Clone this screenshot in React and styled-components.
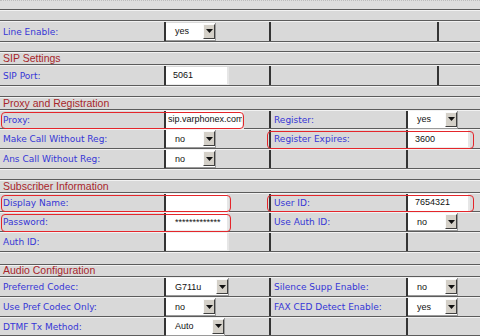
import React from 'react';
import styled, {createGlobalStyle, css} from 'styled-components';

const GlobalStyle = createGlobalStyle`
  html, body {
    margin: 0;
    padding: 0;
    background: #d8d8d8;
  }
  * {
    box-sizing: border-box;
  }
`;

const LINE_DARK = '#5c5c5c';
const LINE_LIGHT = '#f2f2f2';
const DIVIDER = '2px solid #343434';

const Page = styled.div`
  width: 480px;
  height: 336px;
  overflow: hidden;
  display: flex;
  flex-direction: column;
  background: #d9d9d9;
  font-family: "DejaVu Sans", Verdana, sans-serif;
`;

const stripe = css`
  flex: none;
  height: ${p => p.$h}px;
  background: #d9d9d9;
  border-top: 1px solid ${LINE_LIGHT};
  border-bottom: 1px solid ${LINE_DARK};
`;

const TopBand = styled.div`
  ${stripe}
  background: #dedede;
  border-top: 1px dotted #bdbdbd;
`;

const Band = styled.div`
  ${stripe}
`;

const SectionTitle = styled.div`
  ${stripe}
  display: flex;
  align-items: flex-end;
  padding: 0 0 0 3px;
  font-family: "Liberation Sans", Arial, sans-serif;
  font-size: 10.5px;
  line-height: 11px;
  color: #a8262b;
`;

const Row = styled.div`
  ${stripe}
  display: flex;
`;

const Pair = styled.div`
  position: relative;
  display: flex;
  flex: ${p => (p.$grow ? 1 : 'none')};

  ${p => p.$hl && css`
    &::after {
      content: '';
      position: absolute;
      top: 1px;
      bottom: -1px;
      left: ${p.$hl[0]}px;
      right: ${p.$hl[1]}px;
      border: 1px solid #e4262b;
      border-radius: 4px;
      pointer-events: none;
    }
  `}
`;

const Label = styled.div`
  flex: none;
  width: ${p => p.$w}px;
  display: flex;
  align-items: center;
  padding-left: 3px;
  border-right: ${DIVIDER};
  font-size: 9px;
  color: #3636d6;
  white-space: nowrap;
  overflow: hidden;
`;

const Value = styled.div`
  display: flex;
  align-items: center;
  ${p => (p.$w ? `flex: none; width: ${p.$w}px;` : 'flex: 1;')}
  border-right: ${p => (p.$last ? 'none' : DIVIDER)};
`;

const fieldText = css`
  font-family: "Liberation Sans", Arial, sans-serif;
  font-size: 9px;
  color: #111;
`;

const TextBox = styled.div`
  ${fieldText}
  width: ${p => p.$w}px;
  height: 18px;
  display: flex;
  align-items: center;
  padding-left: ${p => (p.$pad != null ? p.$pad : 7)}px;
  background: #fff;
  border-right: 2px solid #e6e6e6;
  border-bottom: 1px solid #ececec;
  white-space: nowrap;
  overflow: hidden;
`;

const SelectBox = styled.div`
  ${fieldText}
  width: ${p => p.$w}px;
  height: 18px;
  display: flex;
  align-items: center;
  justify-content: space-between;
  padding-left: 9px;
  background: #fff;
  border-right: 1px solid #9a9a9a;
  border-bottom: 1px solid #9a9a9a;
`;

const DropBtn = styled.div`
  width: 12px;
  height: 15px;
  display: flex;
  align-items: center;
  justify-content: center;
  background: #d4d0c8;
  border-top: 1px solid #fafafa;
  border-left: 1px solid #fafafa;
  border-right: 1px solid #404040;
  border-bottom: 1px solid #404040;
`;

const Select = ({w, children}) => (
  <SelectBox $w={w}>
    <span>{children}</span>
    <DropBtn>
      <svg width="7" height="4" viewBox="0 0 7 4">
        <polygon points="0,0 7,0 3.5,4" fill="#111" />
      </svg>
    </DropBtn>
  </SelectBox>
);

// one data row: left pair (label + value), right pair (label + value)
const FieldRow = ({h = 20, rightW = 137, left, right, leftHl, rightHl}) => (
  <Row $h={h}>
    <Pair $hl={leftHl}>
      <Label $w={166}>{left ? left.label : ''}</Label>
      <Value $w={105}>{left ? left.field : null}</Value>
    </Pair>
    <Pair $grow $hl={rightHl}>
      <Label $w={rightW}>{right ? right.label : ''}</Label>
      <Value $last>{right ? right.field : null}</Value>
    </Pair>
  </Row>
);

export default function App() {
  return (
    <>
      <GlobalStyle />
      <Page>
        <TopBand $h={10} />
        <Band $h={11} />
        <FieldRow
          h={21}
          rightW={168}
          left={{label: 'Line Enable:', field: <Select w={50}>yes</Select>}}
        />
        <Band $h={10} />

        <SectionTitle $h={13}>SIP Settings</SectionTitle>
        <FieldRow
          h={21}
          rightW={168}
          left={{label: 'SIP Port:', field: <TextBox $w={63}>5061</TextBox>}}
        />
        <Band $h={11} />

        <SectionTitle $h={13}>Proxy and Registration</SectionTitle>
        <FieldRow
          h={19}
          leftHl={[1, 27]}
          left={{label: 'Proxy:', field: <TextBox $w={78} $pad={2}>sip.varphonex.com</TextBox>}}
          right={{label: 'Register:', field: <Select w={50}>yes</Select>}}
        />
        <FieldRow
          rightHl={[-4, 6]}
          left={{label: 'Make Call Without Reg:', field: <Select w={50}>no</Select>}}
          right={{label: 'Register Expires:', field: <TextBox $w={62}>3600</TextBox>}}
        />
        <FieldRow
          left={{label: 'Ans Call Without Reg:', field: <Select w={50}>no</Select>}}
        />
        <Band $h={11} />

        <SectionTitle $h={13}>Subscriber Information</SectionTitle>
        <FieldRow
          h={19}
          leftHl={[1, 40]}
          rightHl={[-4, 6]}
          left={{label: 'Display Name:', field: <TextBox $w={63} />}}
          right={{label: 'User ID:', field: <TextBox $w={62}>7654321</TextBox>}}
        />
        <FieldRow
          leftHl={[1, 40]}
          left={{label: 'Password:', field: <TextBox $w={63} $pad={9}>*************</TextBox>}}
          right={{label: 'Use Auth ID:', field: <Select w={50}>no</Select>}}
        />
        <FieldRow
          left={{label: 'Auth ID:', field: <TextBox $w={63} />}}
        />
        <Band $h={13} />

        <SectionTitle $h={12}>Audio Configuration</SectionTitle>
        <FieldRow
          left={{label: 'Preferred Codec:', field: <Select w={63}>G711u</Select>}}
          right={{label: 'Silence Supp Enable:', field: <Select w={50}>no</Select>}}
        />
        <FieldRow
          left={{label: 'Use Pref Codec Only:', field: <Select w={50}>no</Select>}}
          right={{label: 'FAX CED Detect Enable:', field: <Select w={50}>yes</Select>}}
        />
        <FieldRow
          h={19}
          left={{label: 'DTMF Tx Method:', field: <Select w={59}>Auto</Select>}}
        />
      </Page>
    </>
  );
}
